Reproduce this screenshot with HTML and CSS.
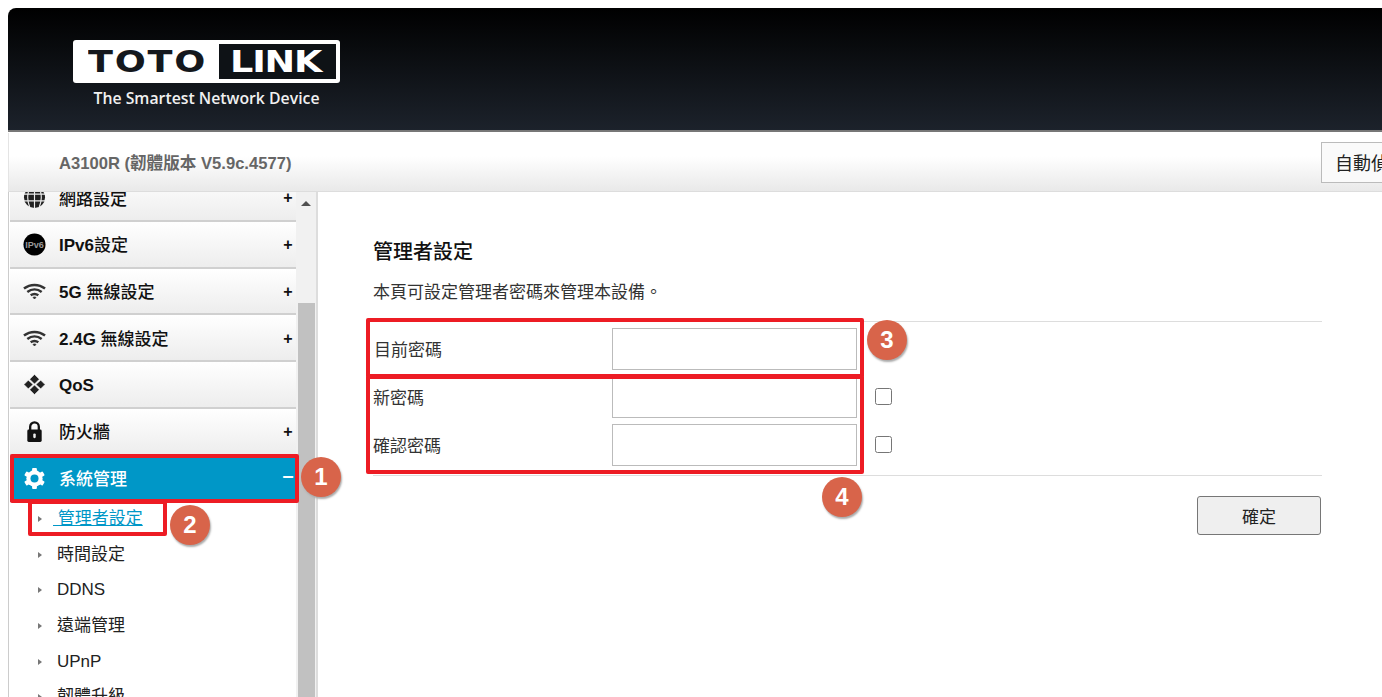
FILE: index.html
```html
<!DOCTYPE html>
<html lang="zh-TW">
<head>
    <meta charset="UTF-8">
    <title>TOTOLINK A3100R</title>
    <link rel="stylesheet" href="styles.css">
</head>
<body>
    <div class="page">
        <div class="top-bar">
            <div class="logo">
                <div class="logo-box">
                    <span class="logo-toto"><span class="logo-wide">TOTO</span></span>
                    <span class="logo-link"><span class="logo-wide">LINK</span></span>
                </div>
                <div class="logo-tag">The Smartest Network Device</div>
            </div>
        </div>
        <div class="sub-bar">
            <div class="model">A3100R (韌體版本 V5.9c.4577)</div>
            <button class="detect-btn">自動偵測</button>
        </div>
        <div class="body-row">
            <div class="sidebar">
                <ul class="menu">
                    <li class="menu-item">
                        <svg class="menu-icon" viewBox="0 0 24 24"><circle cx="12" cy="12" r="11" fill="#222"/><path d="M1 8.500h22M1 15.500h22M12 1v22M7 2c-2.500 6-2.500 14 0 20M17 2c2.500 6 2.500 14 0 20" fill="none" stroke="#eee" stroke-width="1.200"/></svg>
                        <span class="menu-text">網路設定</span><span class="menu-sign">+</span>
                    </li>
                    <li class="menu-item">
                        <svg class="menu-icon" viewBox="0 0 24 24"><circle cx="12" cy="12" r="11.500" fill="#000"/><text x="12" y="15.500" class="ipv6-text">IPv6</text></svg>
                        <span class="menu-text menu-text-up"><b>IPv6</b>設定</span><span class="menu-sign">+</span>
                    </li>
                    <li class="menu-item">
                        <svg class="menu-icon" viewBox="0 0 24 24"><use href="#wifi"/></svg>
                        <span class="menu-text"><b>5G</b> 無線設定</span><span class="menu-sign">+</span>
                    </li>
                    <li class="menu-item">
                        <svg class="menu-icon" viewBox="0 0 24 24"><use href="#wifi"/></svg>
                        <span class="menu-text"><b>2.4G</b> 無線設定</span><span class="menu-sign">+</span>
                    </li>
                    <li class="menu-item">
                        <svg class="menu-icon" viewBox="0 0 24 24"><path d="M12 1.500l5 5-5 5-5-5zM5.500 7.500l5 4.500-5 4.500-4.500-4.500zM18.500 7.500l4.500 4.500-4.500 4.500-5-4.500zM12 12.500l5 5-5 5-5-5z" fill="#222" stroke="#f4f4f4" stroke-width=".6"/></svg>
                        <span class="menu-text menu-text-low"><b>QoS</b></span>
                    </li>
                    <li class="menu-item">
                        <svg class="menu-icon" viewBox="0 0 24 24"><path d="M7.500 11V7a4.500 4.500 0 0 1 9 0v4" fill="none" stroke="#111" stroke-width="2.400"/><rect x="4.500" y="10" width="15" height="13" rx="1.500" fill="#111"/><rect x="10.700" y="14" width="2.600" height="5" rx="1.200" fill="#eee"/></svg>
                        <span class="menu-text menu-text-up">防火牆</span><span class="menu-sign">+</span>
                    </li>
                    <li class="menu-item menu-item-active">
                        <svg class="menu-icon" viewBox="0 0 24 24"><g fill="#fff"><circle cx="12" cy="12" r="8.500"/><rect x="9.500" y="1" width="5" height="22" rx="1"/><rect x="9.500" y="1" width="5" height="22" rx="1" transform="rotate(60 12 12)"/><rect x="9.500" y="1" width="5" height="22" rx="1" transform="rotate(120 12 12)"/></g><circle cx="12" cy="12" r="4.200" fill="#0097c7"/></svg>
                        <span class="menu-text menu-text-up">系統管理</span><span class="menu-sign menu-sign-minus">–</span>
                    </li>
                </ul>
                <ul class="sub-menu">
                    <li class="sub-item"><a class="sub-link" href="#">&nbsp;管理者設定</a></li>
                    <li class="sub-item">時間設定</li>
                    <li class="sub-item">DDNS</li>
                    <li class="sub-item">遠端管理</li>
                    <li class="sub-item">UPnP</li>
                    <li class="sub-item">韌體升級</li>
                </ul>
            </div>
            <div class="scroll-bar">
                <div class="scroll-arrow"></div>
                <div class="scroll-thumb"></div>
            </div>
            <div class="main">
                <h1 class="page-title">管理者設定</h1>
                <p class="page-desc">本頁可設定管理者密碼來管理本設備。</p>
                <div class="form">
                    <label class="form-label form-label-first">目前密碼</label>
                    <input class="form-input" type="password">
                    <span></span>
                    <label class="form-label">新密碼</label>
                    <input class="form-input" type="password">
                    <input class="form-check" type="checkbox">
                    <label class="form-label">確認密碼</label>
                    <input class="form-input" type="password">
                    <input class="form-check" type="checkbox">
                </div>
                <div class="form-actions">
                    <button class="ok-btn">確定</button>
                </div>
            </div>
        </div>
    </div>

    <!-- 標註 -->
    <div class="mark mark-1"></div>
    <div class="mark mark-2"></div>
    <div class="mark mark-3"></div>
    <div class="mark mark-4"></div>
    <div class="badge badge-1">1</div>
    <div class="badge badge-2">2</div>
    <div class="badge badge-3">3</div>
    <div class="badge badge-4">4</div>

    <svg class="icon-defs"><defs><g id="wifi" fill="none" stroke="#333" stroke-width="2.600"><path d="M1 10c6.500-5 15.500-5 22 0"/><path d="M4.500 13.500c4.500-3.400 10.500-3.400 15 0"/><path d="M8 17c2.500-1.700 5.500-1.700 8 0"/><path d="M10.500 19.300l1.500 1.500 1.500-1.500c-.8-.6-2.200-.6-3 0z" fill="#333" stroke-width="1"/></g></defs></svg>
</body>
</html>
```

FILE: styles.css
```css
html {
    overflow: hidden;
}
body {
    margin: 8px 0 0 8px;
    height: 689px;
    overflow: hidden;
    background: #fff;
    font-family: "Liberation Sans", "Noto Sans CJK TC", sans-serif;
    font-size: 17px;
    color: #222;
}
.page {
    width: 1560px;
}
.icon-defs {
    display: none;
}

/* 頂部 */
.top-bar {
    height: 122px;
    background: linear-gradient(#000, #1c222b);
    border-radius: 8px 8px 0 0;
    border-bottom: 2px solid #777;
}
.logo {
    width: 267px;
    margin-left: 65px;
    padding-top: 32px;
}
.logo-box {
    height: 43px;
    box-sizing: border-box;
    background: #fff;
    border-radius: 3px;
    padding: 4px;
    display: flex;
    align-items: stretch;
    justify-content: flex-end;
}
.logo-wide {
    display: inline-block;
    transform: scaleX(1.180);
    transform-origin: left center;
}
.logo-toto {
    flex: 1;
    color: #14181d;
    font: bold 31px/35px "DejaVu Sans", sans-serif;
    letter-spacing: 1.500px;
    padding-left: 11px;
}
.logo-link {
    width: 117px;
    box-sizing: border-box;
    padding-left: 11px;
    background: #0e1216;
    color: #fff;
    font: bold 31px/35px "DejaVu Sans", sans-serif;
    letter-spacing: -1px;
}
.logo-tag {
    margin-top: 5px;
    text-align: center;
    color: #f0f0f0;
    font: 600 15.800px/20px "Open Sans", sans-serif;
}

/* 型號列 */
.sub-bar {
    height: 59px;
    box-sizing: border-box;
    display: flex;
    align-items: center;
    padding-left: 50px;
    background: linear-gradient(#fff 40%, #e9e9e9);
    border-bottom: 1px solid #ddd;
    border-left: 1px solid #e4e4e4;
    margin-top: 1px;
}
.model {
    flex: 0 0 1262px;
    color: #666;
    font-weight: bold;
    font-size: 16.600px;
}
.detect-btn {
    width: 170px;
    height: 41px;
    background: #fafafa;
    border: 1px solid #bbb;
    font-family: inherit;
    font-size: 18px;
    text-align: left;
    padding-left: 13px;
    color: #222;
}

/* 版面 */
.body-row {
    display: flex;
    height: 520px;
    border-left: 1px solid #ccc;
}
.sidebar {
    width: 286px;
    padding-left: 1px;
    overflow: hidden;
    flex: none;
}
.menu {
    list-style: none;
    margin: -17px 0 0 0;
    padding: 0;
}
.menu-item {
    height: 46.750px;
    box-sizing: border-box;
    display: flex;
    align-items: center;
    padding: 0 2px 0 13px;
    background: linear-gradient(#fff, #ededed);
    border-bottom: 2px solid #d0d0d0;
    font-weight: 500;
    color: #111;
}
.menu-icon {
    width: 23px;
    height: 23px;
    flex: none;
}
.ipv6-text {
    font: bold 9.500px "Liberation Sans", sans-serif;
    fill: #999;
    text-anchor: middle;
}
.menu-text {
    margin-left: 13px;
    flex: 1;
}
.menu-text-low {
    padding-top: 3px;
}
.menu-text-up {
    padding-bottom: 2px;
}
.menu-sign {
    width: 12px;
    text-align: center;
    font-size: 16px;
    font-weight: bold;
    line-height: 1;
    margin-top: 2px;
}
.menu-sign-minus {
    font-size: 20px;
    margin: 0 0 8px 0;
}
.menu-item-active {
    background: #0097c7;
    color: #fff;
    border-bottom: 0;
}
.sub-menu {
    list-style: none;
    margin: -1px 0 0 0;
    padding: 0;
}
.sub-item {
    height: 35.600px;
    line-height: 35.600px;
    padding-left: 47px;
    position: relative;
    color: #222;
}
.sub-item::before {
    content: "";
    position: absolute;
    left: 28px;
    top: 15px;
    border-left: 4px solid #777;
    border-top: 3px solid transparent;
    border-bottom: 3px solid transparent;
}
.sub-link {
    color: #0097c7;
    margin-left: -4px;
}

/* 捲軸 */
.scroll-bar {
    width: 20px;
    flex: none;
    background: #f1f1f1;
    border-right: 2px solid #ddd;
    display: flex;
    flex-direction: column;
    align-items: center;
}
.scroll-arrow {
    margin-top: 9px;
    border-left: 5px solid transparent;
    border-right: 5px solid transparent;
    border-bottom: 5px solid #505050;
}
.scroll-thumb {
    width: 17px;
    flex: 1;
    margin-top: 97px;
    background: #c1c1c1;
}

/* 內容 */
.main {
    width: 949px;
    margin-left: 55px;
    flex: none;
}
.page-title {
    margin: 48px 0 0 0;
    font-size: 20px;
    line-height: 24px;
    font-weight: 500;
    color: #111;
}
.page-desc {
    margin: 17px 0 0 0;
    line-height: 24px;
    color: #333;
}
.form {
    margin-top: 16px;
    padding: 6px 0 9px;
    border-top: 1px solid #ddd;
    border-bottom: 1px solid #ddd;
    display: grid;
    grid-template-columns: 239px 245px auto;
    grid-auto-rows: 42px;
    row-gap: 6px;
    align-items: center;
}
.form-label {
    color: #333;
    margin-bottom: 2px;
}
.form-label-first {
    margin-left: 1px;
}
.form-input {
    height: 42px;
    width: 245px;
    box-sizing: border-box;
    border: 1px solid #bbb;
    background: #fff;
    margin: 0;
}
.form-check {
    width: 17px;
    height: 17px;
    margin: 0 0 2px 18px;
}
.form-actions {
    display: flex;
    justify-content: flex-end;
    margin: 20px 1px 0 0;
}
.ok-btn {
    width: 124px;
    height: 39px;
    background: #efefef;
    border: 1px solid #767676;
    border-radius: 3px;
    font-family: inherit;
    font-size: 17px;
    color: #222;
}

/* 標註 */
.mark {
    position: absolute;
    box-sizing: border-box;
    border: 4px solid #ed1c24;
    border-radius: 2px;
}
.mark-1 { left: 10px; top: 454px; width: 289px; height: 49px; }
.mark-2 { left: 28px; top: 500px; width: 139px; height: 36px; }
.mark-3 { left: 366px; top: 318px; width: 498px; height: 60px; }
.mark-4 { left: 366px; top: 375px; width: 498px; height: 99px; }
.badge {
    position: absolute;
    width: 40px;
    height: 40px;
    border-radius: 50%;
    background: #d8644a;
    box-shadow: 1px 2px 2px #aaa;
    color: #fff;
    font: bold 24px/40px "Liberation Sans", sans-serif;
    text-align: center;
}
.badge-1 { left: 301px; top: 457px; }
.badge-2 { left: 170px; top: 505px; }
.badge-3 { left: 867px; top: 320px; }
.badge-4 { left: 822px; top: 477px; }
```
